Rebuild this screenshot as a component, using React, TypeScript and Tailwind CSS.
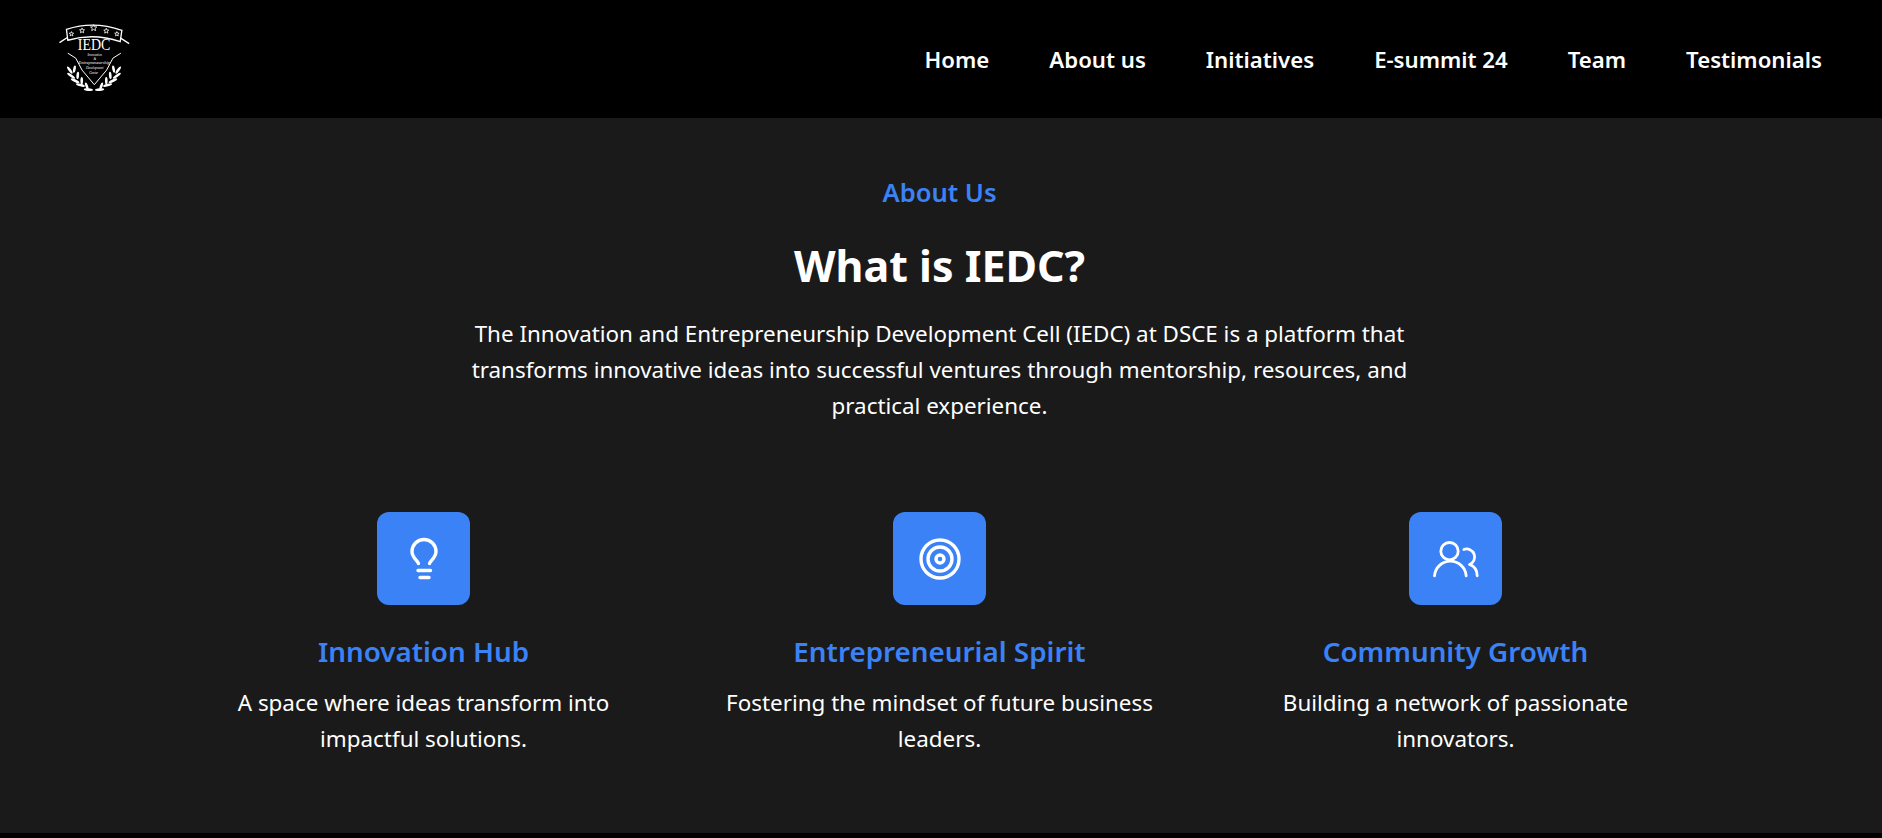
import React from "react";

const links = ["Home", "About us", "Initiatives", "E-summit 24", "Team", "Testimonials"];

function Star({ x, y, r }: { x: number; y: number; r: number }) {
  const pts = Array.from({ length: 10 }, (_, i) => {
    const a = -Math.PI / 2 + (i * Math.PI) / 5;
    const d = i % 2 === 0 ? r : r * 0.45;
    return `${(x + d * Math.cos(a)).toFixed(1)},${(y + d * Math.sin(a)).toFixed(1)}`;
  }).join(" ");
  return <polygon points={pts} fill="none" stroke="white" strokeWidth="2.5" />;
}

const leaves: [number, number, number, number][] = [
  [88, 208, 13, 55],
  [102, 205, 11, 100],
  [92, 225, 14, 35],
  [112, 224, 11, 95],
  [104, 240, 14, 25],
  [124, 240, 11, 90],
  [120, 253, 14, 15],
  [139, 256, 11, 70],
  [144, 267, 14, 5],
];

function Logo() {
  return (
    <svg width="75" height="73" viewBox="50 60 225 220" fill="none" stroke="white" className="block">
      <path d="M78 85 Q160 58 245 88 L240 122 Q160 95 82 118 Z" strokeWidth="4" />
      <path d="M57 125 L82 109 M267 128 L240 111" strokeWidth="4" />
      <Star x={93} y={99} r={7} />
      <Star x={125} y={89} r={8} />
      <Star x={160} y={81} r={10} />
      <Star x={198} y={90} r={8} />
      <Star x={230} y={99} r={7} />
      <g fill="white" stroke="none" fontFamily="'Liberation Serif',serif" textAnchor="middle">
        <text x="161" y="147" fontSize="50" textLength="98" lengthAdjust="spacingAndGlyphs">IEDC</text>
        <text x="163" y="167" fontSize="10" fontStyle="italic">Innovation</text>
        <text x="163" y="178.5" fontSize="10" fontStyle="italic">&amp;</text>
        <text x="162" y="190" fontSize="10" fontStyle="italic" textLength="95" lengthAdjust="spacingAndGlyphs">Entrepreneurship</text>
        <text x="163" y="204" fontSize="10" fontStyle="italic">Development</text>
        <text x="160" y="219" fontSize="10" fontStyle="italic">Center</text>
      </g>
      <path d="M82 157 L106 172 L125 208 L162 252 L199 208 L218 172 L242 157" strokeWidth="3" />
      {leaves.map(([x, y, r, a], i) => (
        <g key={i} fill="white" stroke="none">
          <ellipse cx={x} cy={y} rx={r} ry={4} transform={`rotate(${a} ${x} ${y})`} />
          <ellipse cx={322 - x} cy={y} rx={r} ry={4} transform={`rotate(${-a} ${322 - x} ${y})`} />
        </g>
      ))}
    </svg>
  );
}

const cards = [
  {
    title: "Innovation Hub",
    text: "A space where ideas transform into impactful solutions.",
    icon: (
      <svg width="60" height="60" viewBox="0 0 60 60" fill="none" stroke="white" strokeWidth="3.4" strokeLinecap="round" strokeLinejoin="round">
        <path d="M24.5 34.5 C23.5 31.5 18 28.5 18 22.5 A12 12 0 0 1 42 22.5 C42 28.5 36.5 31.5 35.5 34.5" />
        <path d="M24 41.5h12.5M26 48.5h9" />
      </svg>
    ),
  },
  {
    title: "Entrepreneurial Spirit",
    text: "Fostering the mindset of future business leaders.",
    icon: (
      <svg width="60" height="60" viewBox="0 0 60 60" fill="none" stroke="white" strokeWidth="3.4">
        <circle cx="30" cy="30" r="19" />
        <circle cx="30" cy="30" r="12" />
        <circle cx="30" cy="30" r="4" />
      </svg>
    ),
  },
  {
    title: "Community Growth",
    text: "Building a network of passionate innovators.",
    icon: (
      <svg width="60" height="60" viewBox="0 0 60 60" fill="none" stroke="white" strokeWidth="2.8" strokeLinecap="round" strokeLinejoin="round">
        <circle cx="23.5" cy="22.2" r="8.7" />
        <path d="M8.5 46.8 A15.9 15.9 0 0 1 40.2 46.8" />
        <path d="M37.8 20.5 A8 8 0 0 1 43.5 35.5 C48 37 51.2 41 51.2 46.8" />
      </svg>
    ),
  },
];

export default function App() {
  return (
    <div className="min-h-[838px] bg-black font-['Noto_Sans',sans-serif] text-white">
      <header className="h-[118px] bg-black flex items-center justify-between pl-[57px] pr-[60px]">
        <div className="-mt-[4px]">
          <Logo />
        </div>
        <nav className="flex gap-[60px] text-[22.2px] font-semibold mt-[1px]">
          {links.map((l) => (
            <a key={l}>{l}</a>
          ))}
        </nav>
      </header>
      <main className="h-[715px] bg-[#1a1a1a] flex flex-col items-center pt-[57px] pr-[3px]">
        <p className="text-[25.6px] leading-[36px] font-semibold text-[#3b82f6]">About Us</p>
        <h2 className="mt-[25px] text-[43px] leading-[60px] font-bold">What is IEDC?</h2>
        <p className="mt-[20px] w-[960px] text-center text-[22.4px] leading-[36px]">
          The Innovation and Entrepreneurship Development Cell (IEDC) at DSCE is a platform that transforms innovative ideas into successful ventures through mentorship, resources, and practical experience.
        </p>
        <div className="mt-[88px] flex justify-center gap-[76px]">
          {cards.map((c) => (
            <div key={c.title} className="w-[440px] flex flex-col items-center text-center">
              <div className="w-[93px] h-[93px] rounded-xl bg-[#3b82f6] flex items-center justify-center">{c.icon}</div>
              <h3 className="mt-[26px] text-[27.8px] leading-[40px] font-semibold text-[#3b82f6]">{c.title}</h3>
              <p className="mt-[14px] w-[440px] text-[22.4px] leading-[36px]">{c.text}</p>
            </div>
          ))}
        </div>
      </main>
    </div>
  );
}
